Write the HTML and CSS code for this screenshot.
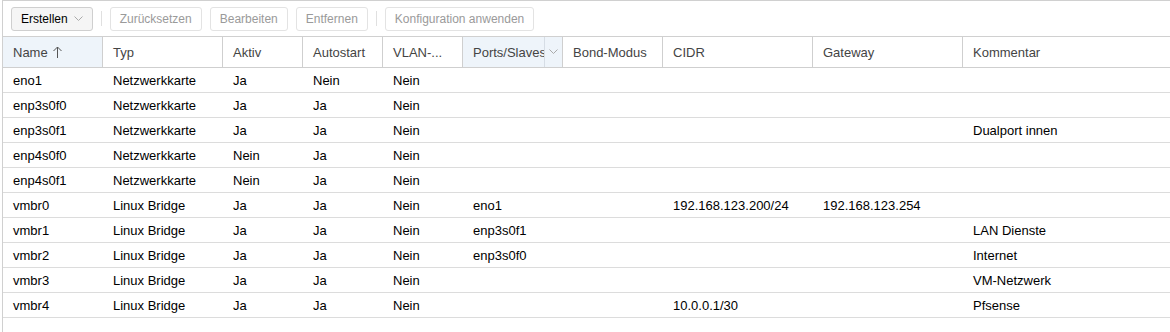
FILE: index.html
```html
<!DOCTYPE html>
<html lang="de">
<head>
  <meta charset="UTF-8" />
  <title>Netzwerk</title>
  <link rel="stylesheet" href="styles.css">
</head>
<body>
  <div class="panel">
    <div class="toolbar">
      <button class="btn">Erstellen <svg class="chev" width="9" height="6" viewBox="0 0 9 6"><path d="M0.5 0.5 L4.5 4.5 L8.5 0.5" fill="none" stroke="#aaa" stroke-width="1"/></svg></button>
      <span class="sep"></span>
      <button class="btn off">Zurücksetzen</button>
      <button class="btn off">Bearbeiten</button>
      <button class="btn off">Entfernen</button>
      <span class="sep"></span>
      <button class="btn off">Konfiguration anwenden</button>
    </div>

    <div class="grid">
      <div class="row head">
        <div class="cell sorted">Name <svg class="arrow" width="9" height="12" viewBox="0 0 9 12"><path d="M4.5 1 V12 M0.5 5 L4.5 1 L8.5 5" fill="none" stroke="#555" stroke-width="1"/></svg></div>
        <div class="cell">Typ</div>
        <div class="cell">Aktiv</div>
        <div class="cell">Autostart</div>
        <div class="cell">VLAN-...</div>
        <div class="cell hover">Ports/Slaves<span class="trigger"><svg width="9" height="6" viewBox="0 0 9 6"><path d="M0.5 0.5 L4.5 4.5 L8.5 0.5" fill="none" stroke="#aaa" stroke-width="1"/></svg></span></div>
        <div class="cell">Bond-Modus</div>
        <div class="cell">CIDR</div>
        <div class="cell">Gateway</div>
        <div class="cell">Kommentar</div>
      </div>
      <div id="rows"></div>
    </div>
  </div>

  <script>
    const nets = [
      ['eno1', 'Netzwerkkarte', 'Ja', 'Nein', 'Nein', '', '', '', '', ''],
      ['enp3s0f0', 'Netzwerkkarte', 'Ja', 'Ja', 'Nein', '', '', '', '', ''],
      ['enp3s0f1', 'Netzwerkkarte', 'Ja', 'Ja', 'Nein', '', '', '', '', 'Dualport innen'],
      ['enp4s0f0', 'Netzwerkkarte', 'Nein', 'Ja', 'Nein', '', '', '', '', ''],
      ['enp4s0f1', 'Netzwerkkarte', 'Nein', 'Ja', 'Nein', '', '', '', '', ''],
      ['vmbr0', 'Linux Bridge', 'Ja', 'Ja', 'Nein', 'eno1', '', '192.168.123.200/24', '192.168.123.254', ''],
      ['vmbr1', 'Linux Bridge', 'Ja', 'Ja', 'Nein', 'enp3s0f1', '', '', '', 'LAN Dienste'],
      ['vmbr2', 'Linux Bridge', 'Ja', 'Ja', 'Nein', 'enp3s0f0', '', '', '', 'Internet'],
      ['vmbr3', 'Linux Bridge', 'Ja', 'Ja', 'Nein', '', '', '', '', 'VM-Netzwerk'],
      ['vmbr4', 'Linux Bridge', 'Ja', 'Ja', 'Nein', '', '', '10.0.0.1/30', '', 'Pfsense']
    ];

    const box = document.getElementById('rows');
    nets.forEach(n => {
      const row = document.createElement('div');
      row.className = 'row';
      row.innerHTML = n.map(v => `<div class="cell">${v}</div>`).join('');
      box.appendChild(row);
    });
  </script>
</body>
</html>
```

FILE: styles.css
```css
body { margin: 0; font-family: "Liberation Sans", Arial, sans-serif; font-size: 13px; color: #000; background: #fff; }
.panel { margin-left: 2px; border-left: 1px solid #d0d0d0; border-top: 1px solid #d0d0d0; height: 331px; }
.toolbar { display: flex; align-items: center; height: 35px; padding: 0 0 0 8px; box-sizing: border-box; }
.btn { font-family: inherit; font-size: 12px; height: 24px; padding: 0 9px; margin-right: 8px; border: 1px solid #cfcfcf; border-radius: 3px; background: #f5f5f5; color: #000; display: flex; align-items: center; gap: 6px; }
.btn.off { background: #fff; border-color: #e3e3e3; color: #9a9a9a; }
.chev { margin-top: 1px; }
.sep { width: 1px; height: 15px; background: #e0e0e0; margin: 0 8px 0 0; }
.grid { border-top: 1px solid #d0d0d0; }
.row { display: grid; grid-template-columns: 100px 120px 80px 80px 80px 100px 100px 150px 150px 1fr; height: 25px; box-sizing: border-box; border-bottom: 1px solid #dcdcdc; }
.row .cell { padding: 0 10px; display: flex; align-items: center; white-space: nowrap; overflow: hidden; box-sizing: border-box; }
.row.head { height: 31px; border-bottom: 1px solid #cfcfcf; color: #444; }
.head .cell { border-right: 1px solid #cfcfcf; position: relative; }
.head .cell:last-child { border-right: none; }
.head .sorted, .head .hover { background: #eef4fa; }
.arrow { margin-left: 5px; }
.head .hover { padding-right: 18px; }
.trigger { position: absolute; right: 0; top: 0; bottom: 0; width: 17px; border-left: 1px solid #d6dde5; display: flex; align-items: center; justify-content: center; background: #eef4fa; }
```
